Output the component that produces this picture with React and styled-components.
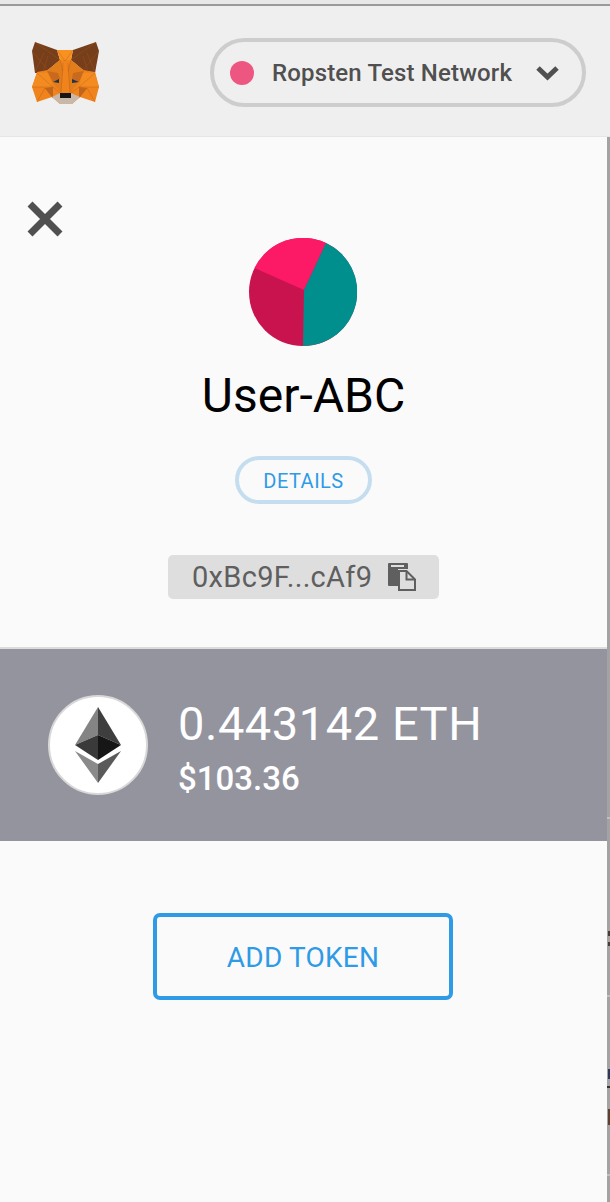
import React from 'react';
import styled, { createGlobalStyle } from 'styled-components';

const GlobalStyle = createGlobalStyle`
  html, body {
    margin: 0;
    padding: 0;
    background: #fafafa;
  }
  body {
    font-family: Roboto, "Liberation Sans", sans-serif;
    overflow: hidden;
  }
`;

const Page = styled.div`
  width: 610px;
  height: 1202px;
  display: flex;
  flex-direction: column;
  overflow: hidden;
`;

const TopEdge = styled.div`
  height: 6px;
  flex: none;
  background: linear-gradient(#e8e8e8 0, #e8e8e8 4px, #9a9a9a 4px, #9a9a9a 6px);
`;

const Header = styled.header`
  height: 131px;
  flex: none;
  display: flex;
  align-items: center;
  justify-content: space-between;
  padding: 3px 24px 0 32px;
  box-sizing: border-box;
  background: #efefef;
  border-bottom: 1px solid #e6e6e6;
`;

const NetworkPill = styled.div`
  width: 376px;
  height: 69px;
  box-sizing: border-box;
  display: flex;
  align-items: center;
  padding: 0 23px 0 16px;
  border: 4px solid #cdcdcd;
  border-radius: 35px;
  color: #505050;
`;

const NetworkDot = styled.span`
  width: 24px;
  height: 24px;
  flex: none;
  border-radius: 50%;
  background: #ee5682;
`;

const NetworkName = styled.span`
  flex: 1;
  margin-left: 18px;
  font-size: 24px;
  font-weight: 500;
  letter-spacing: 0.15px;
`;

const Columns = styled.div`
  flex: 1;
  display: flex;
`;

const Body = styled.main`
  flex: 1;
  display: flex;
  flex-direction: column;
  background: #fafafa;
`;

// sliver of the page behind the popup
const Backdrop = styled.aside`
  width: 3px;
  flex: none;
  position: relative;
  background: #a3a3a3;
`;

const BackdropMark = styled.span`
  position: absolute;
  left: ${p => p.$left}px;
  right: 0;
  top: ${p => p.$top}px;
  height: ${p => p.$height}px;
  background: ${p => p.$color};
`;

const AccountSection = styled.section`
  height: 512px;
  flex: none;
  box-sizing: border-box;
  display: flex;
  flex-direction: column;
  align-items: center;
  padding-top: 101px;
  position: relative;
  border-bottom: 2px solid #dcdcdc;
`;

const CloseButton = styled.svg`
  position: absolute;
  left: 26px;
  top: 63px;
  width: 38px;
  height: 38px;
`;

const Identicon = styled.svg`
  width: 108px;
  height: 108px;
  flex: none;
  margin-right: 1px;
`;

const AccountName = styled.h1`
  margin: 22px 0 0;
  font-size: 48px;
  line-height: 56px;
  font-weight: 400;
  color: #000;
`;

const DetailsButton = styled.div`
  width: 137px;
  height: 48px;
  margin-top: 32px;
  padding-top: 1px;
  box-sizing: border-box;
  display: flex;
  align-items: center;
  justify-content: center;
  border: 4px solid #c5deef;
  border-radius: 24px;
  color: #2f9ae6;
  font-size: 20px;
  letter-spacing: 0.5px;
`;

const AddressChip = styled.div`
  width: 271px;
  height: 44px;
  margin-top: 51px;
  box-sizing: border-box;
  display: flex;
  align-items: center;
  padding-left: 24px;
  gap: 16px;
  border-radius: 5px;
  background: #dedede;
  color: #5f5f5f;
  font-size: 29px;
  letter-spacing: 0.3px;
`;

const BalanceRow = styled.section`
  height: 192px;
  flex: none;
  box-sizing: border-box;
  display: flex;
  align-items: center;
  padding: 0 0 0 48px;
  gap: 30px;
  background: #94949f;
  color: #fff;
`;

const EthBadge = styled.div`
  width: 100px;
  height: 100px;
  flex: none;
  box-sizing: border-box;
  display: flex;
  align-items: center;
  justify-content: center;
  border-radius: 50%;
  border: 2px solid #d8d8d8;
  background: #fff;
`;

const Amounts = styled.div`
  display: flex;
  flex-direction: column;
  padding-top: 5px;
`;

const EthAmount = styled.div`
  font-size: 47px;
  line-height: 56px;
  letter-spacing: 0.55px;
`;

const FiatAmount = styled.div`
  margin-top: 7px;
  font-size: 33px;
  line-height: 40px;
  font-weight: 500;
`;

const TokenSection = styled.section`
  flex: 1;
  display: flex;
  justify-content: center;
  align-items: flex-start;
  padding: 72px 1px 0 0;
`;

const AddTokenButton = styled.div`
  width: 300px;
  height: 87px;
  padding-top: 2px;
  box-sizing: border-box;
  display: flex;
  align-items: center;
  justify-content: center;
  border: 4px solid #2f9ae6;
  border-radius: 7px;
  color: #2f9ae6;
  font-size: 28px;
  letter-spacing: 0.2px;
`;

const facetLines = [
  'M35 41 L60 59 M32 50 L48 69 M43 71 L48 55 M35 71 L44 52',
  'M96 41 L71 59 M99 50 L83 69 M88 71 L83 55 M95 71 L87 52',
  'M57 49 L65 60 L73 49 M63 62 L61 92 M68 62 L70 92 M60 59 L63 70 M71 59 L68 70',
  'M37 72 L53 86 L32 86 M37 101 L45 87 L52 96 M53 86 L60 92',
  'M95 72 L79 86 L99 86 M95 101 L87 87 L80 96 M79 86 L71 92',
];

const FoxLogo = () => (
  <svg width="67" height="64" viewBox="32 40 67 64">
    <polygon points="35,41 57,49 60,59 48,69 43,72 35,72 32,50" fill="#763e1a" />
    <polygon points="96,41 73,49 71,59 83,69 88,72 95,72 99,50" fill="#763e1a" />
    <polygon points="57,49 73,49 71,59 60,59" fill="#f8911f" />
    <polygon points="60,59 71,59 83,69 95,71 99,86 95,101 80,96 72,103 60,103 52,96 37,101 32,86 37,71 48,69" fill="#f0831b" />
    <polygon points="60,59 63,70 61,92 53,82 47,70" fill="#e27d1c" />
    <polygon points="71,59 68,70 70,92 78,82 84,70" fill="#e27d1c" />
    <polygon points="47,70 58,72 60,78 53,81" fill="#c9691d" />
    <polygon points="84,70 73,72 72,78 79,81" fill="#c9691d" />
    <polygon points="37,72 48,72 53,86 32,86" fill="#f48b20" />
    <polygon points="95,72 83,72 79,86 99,86" fill="#f48b20" />
    <polygon points="45,87 53,86 53,97" fill="#c0651c" />
    <polygon points="87,87 79,86 79,97" fill="#c0651c" />
    <polygon points="53,81 59,78 59,82" fill="#233447" />
    <polygon points="79,81 72,78 72,82" fill="#233447" />
    <polygon points="52,96 60,92 71,92 80,96 72,103 60,103" fill="#c9b8a8" />
    <polygon points="60,92 71,92 71,97 60,97" fill="#161616" />
    <path d={facetLines.join(' ')} fill="none" stroke="#a8581a" strokeWidth="0.5" opacity="0.7" />
  </svg>
);

const PieIdenticon = () => (
  <Identicon viewBox="0 0 108 108">
    <circle cx="54" cy="54" r="54" fill="#c8134f" />
    <path d="M5.500 30 L55 52 L77 5 A54 54 0 0 0 5.500 30Z" fill="#fc1a66" />
    <path d="M77 5 L55 52 L54 108 A54 54 0 0 0 77 5Z" fill="#018f8e" />
  </Identicon>
);

const CopyIcon = () => (
  <svg width="28" height="28" viewBox="0 0 28 28">
    <path d="M1 0h18a1 1 0 0 1 1 1v5H10v17H1a1 1 0 0 1-1-1V1a1 1 0 0 1 1-1Z" fill="#5f5f5f" />
    <rect x="3" y="2" width="13" height="2" fill="#dedede" />
    <path d="M11 8h7.500L27 16.500V27H11Z" fill="#dedede" stroke="#5f5f5f" strokeWidth="2" />
    <path d="M18.500 8v8.500H27" fill="none" stroke="#5f5f5f" strokeWidth="2" />
  </svg>
);

const EthLogo = () => (
  <svg width="46" height="76" viewBox="0 0 46 76">
    <polygon points="23,0 0,38 23,28" fill="#848484" />
    <polygon points="23,0 46,38 23,28" fill="#3e3e3e" />
    <polygon points="0,38 23,28 23,53" fill="#3a3a3a" />
    <polygon points="46,38 23,28 23,53" fill="#161616" />
    <polygon points="0,44 23,57 23,76" fill="#8a8a8a" />
    <polygon points="46,44 23,57 23,76" fill="#5a5a5a" />
  </svg>
);

// y is measured from the top of the strip (138px down the page)
const backdropMarks = [
  { top: 680, height: 2, left: 0, color: '#c0c0c0' },
  { top: 794, height: 5, left: 1, color: '#4a3c30' },
  { top: 805, height: 4, left: 1, color: '#4a3c30' },
  { top: 858, height: 2, left: 0, color: '#c0c0c0' },
  { top: 932, height: 10, left: 1, color: '#2b3a5c' },
  { top: 949, height: 2, left: 0, color: '#333333' },
  { top: 972, height: 16, left: 1, color: '#5c4030' },
  { top: 1037, height: 2, left: 0, color: '#c0c0c0' },
];

const App = () => (
  <Page>
    <GlobalStyle />
    <TopEdge />
    <Header>
      <FoxLogo />
      <NetworkPill>
        <NetworkDot />
        <NetworkName>Ropsten Test Network</NetworkName>
        <svg width="23" height="16" viewBox="0 0 23 16">
          <path d="M2 3 L11.500 12 L21 3" fill="none" stroke="#505050" strokeWidth="5" />
        </svg>
      </NetworkPill>
    </Header>
    <Columns>
      <Body>
        <AccountSection>
          <CloseButton viewBox="0 0 38 38">
            <path d="M4 4 L34 34 M34 4 L4 34" stroke="#505050" strokeWidth="7" />
          </CloseButton>
          <PieIdenticon />
          <AccountName>User-ABC</AccountName>
          <DetailsButton>DETAILS</DetailsButton>
          <AddressChip>
            0xBc9F...cAf9
            <CopyIcon />
          </AddressChip>
        </AccountSection>
        <BalanceRow>
          <EthBadge>
            <EthLogo />
          </EthBadge>
          <Amounts>
            <EthAmount>0.443142 ETH</EthAmount>
            <FiatAmount>$103.36</FiatAmount>
          </Amounts>
        </BalanceRow>
        <TokenSection>
          <AddTokenButton>ADD TOKEN</AddTokenButton>
        </TokenSection>
      </Body>
      <Backdrop>
        {backdropMarks.map((mark, i) => (
          <BackdropMark key={i} $top={mark.top} $height={mark.height} $left={mark.left} $color={mark.color} />
        ))}
      </Backdrop>
    </Columns>
  </Page>
);

export default App;
